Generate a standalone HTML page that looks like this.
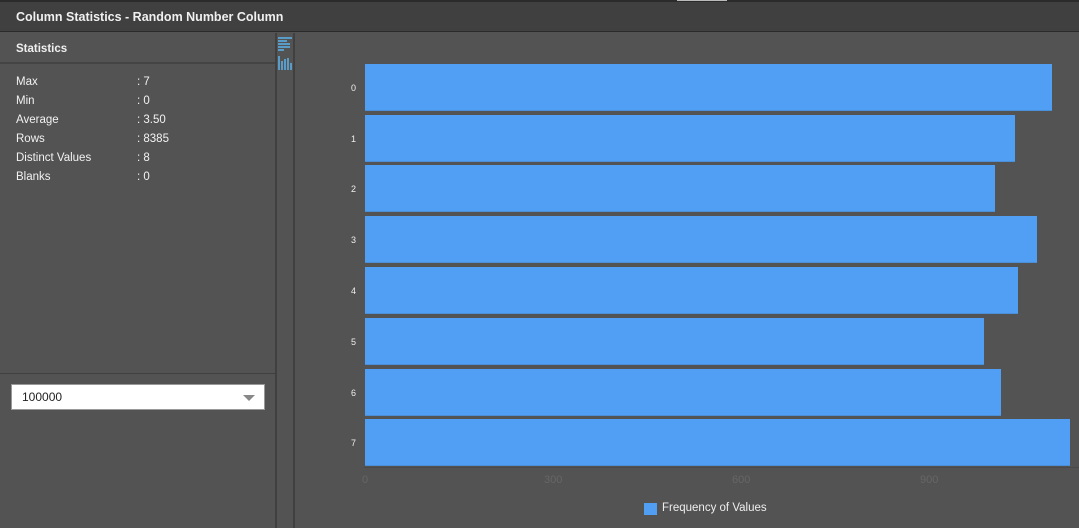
<!DOCTYPE html><html><head><style>
body{margin:0;width:1079px;height:528px;background:#535353;font-family:"Liberation Sans",sans-serif;position:relative;overflow:hidden;color:#fff}
div{position:absolute;box-sizing:border-box}
.bar{left:365px;height:47px;background:#519ff5;border-bottom:1px solid #4a8fd8}
.yl{left:351px;font-size:9px;color:#eee}
.st{left:16px;font-size:11.5px;color:#f2f2f2}
.sv{left:137px;font-size:11.5px;color:#f2f2f2}
.tk{top:474px;font-size:11px;color:#666}
</style></head><body>
<div style="left:0;top:0;width:1079px;height:2px;background:#2b2b2b"></div>
<div style="left:677px;top:0;width:50px;height:1px;background:#bbb"></div>
<div style="left:0;top:2px;width:1079px;height:30px;background:#404040;border-bottom:1px solid #2b2b2b"></div>
<div style="left:16px;top:10px;font-size:12.5px;font-weight:bold;color:#f0f0f0">Column Statistics - Random Number Column</div>
<div style="left:0;top:33px;width:275px;height:31px;border-bottom:2px solid #444"></div>
<div style="left:16px;top:43px;font-size:11.5px;font-weight:bold;color:#f0f0f0">Statistics</div>
<div style="left:275px;top:33px;width:2px;height:495px;background:#404040"></div>
<div style="left:293px;top:33px;width:2px;height:495px;background:#404040"></div>
<div style="left:0;top:373px;width:275px;height:1px;background:#404040"></div>
<div class="st" style="top:76px">Max</div><div class="sv" style="top:76px">: 7</div>
<div class="st" style="top:95px">Min</div><div class="sv" style="top:95px">: 0</div>
<div class="st" style="top:114px">Average</div><div class="sv" style="top:114px">: 3.50</div>
<div class="st" style="top:133px">Rows</div><div class="sv" style="top:133px">: 8385</div>
<div class="st" style="top:152px">Distinct Values</div><div class="sv" style="top:152px">: 8</div>
<div class="st" style="top:171px">Blanks</div><div class="sv" style="top:171px">: 0</div>
<div style="left:11px;top:384px;width:254px;height:26px;background:#fff;border:1px solid #999"></div>
<div style="left:22px;top:390px;font-size:12px;color:#222">100000</div>
<div style="left:243px;top:395px;width:0;height:0;border-left:6px solid transparent;border-right:6px solid transparent;border-top:6px solid #888"></div>
<svg style="position:absolute;left:277px;top:36px;display:block" width="16" height="35" viewBox="0 0 16 35"><g fill="#5a9cc8"><rect x="1" y="1" width="14" height="2"/><rect x="1" y="4" width="9" height="2"/><rect x="1" y="7" width="12" height="2"/><rect x="1" y="10" width="12" height="2"/><rect x="1" y="13" width="6" height="2"/><rect x="1" y="20" width="2" height="14"/><rect x="4" y="25" width="2" height="9"/><rect x="7" y="23" width="2" height="11"/><rect x="10" y="22" width="2" height="12"/><rect x="13" y="27" width="2" height="7"/></g></svg>
<div class="bar" style="top:64px;width:687px"></div>
<div class="bar" style="top:115px;width:650px"></div>
<div class="bar" style="top:165px;width:630px"></div>
<div class="bar" style="top:216px;width:672px"></div>
<div class="bar" style="top:267px;width:653px"></div>
<div class="bar" style="top:318px;width:619px"></div>
<div class="bar" style="top:369px;width:636px"></div>
<div class="bar" style="top:419px;width:705px"></div>
<div class="yl" style="top:83px">0</div><div class="yl" style="top:134px">1</div><div class="yl" style="top:184px">2</div><div class="yl" style="top:235px">3</div><div class="yl" style="top:286px">4</div><div class="yl" style="top:337px">5</div><div class="yl" style="top:388px">6</div><div class="yl" style="top:438px">7</div>
<div style="left:364px;top:467px;width:715px;height:1px;background:#4a4a4a"></div>
<div class="tk" style="left:362px">0</div><div class="tk" style="left:544px">300</div><div class="tk" style="left:732px">600</div><div class="tk" style="left:920px">900</div>
<div style="left:644px;top:503px;width:13px;height:12px;background:#519ff5"></div>
<div style="left:662px;top:502px;font-size:11.5px;color:#eee">Frequency of Values</div>
</body></html>
